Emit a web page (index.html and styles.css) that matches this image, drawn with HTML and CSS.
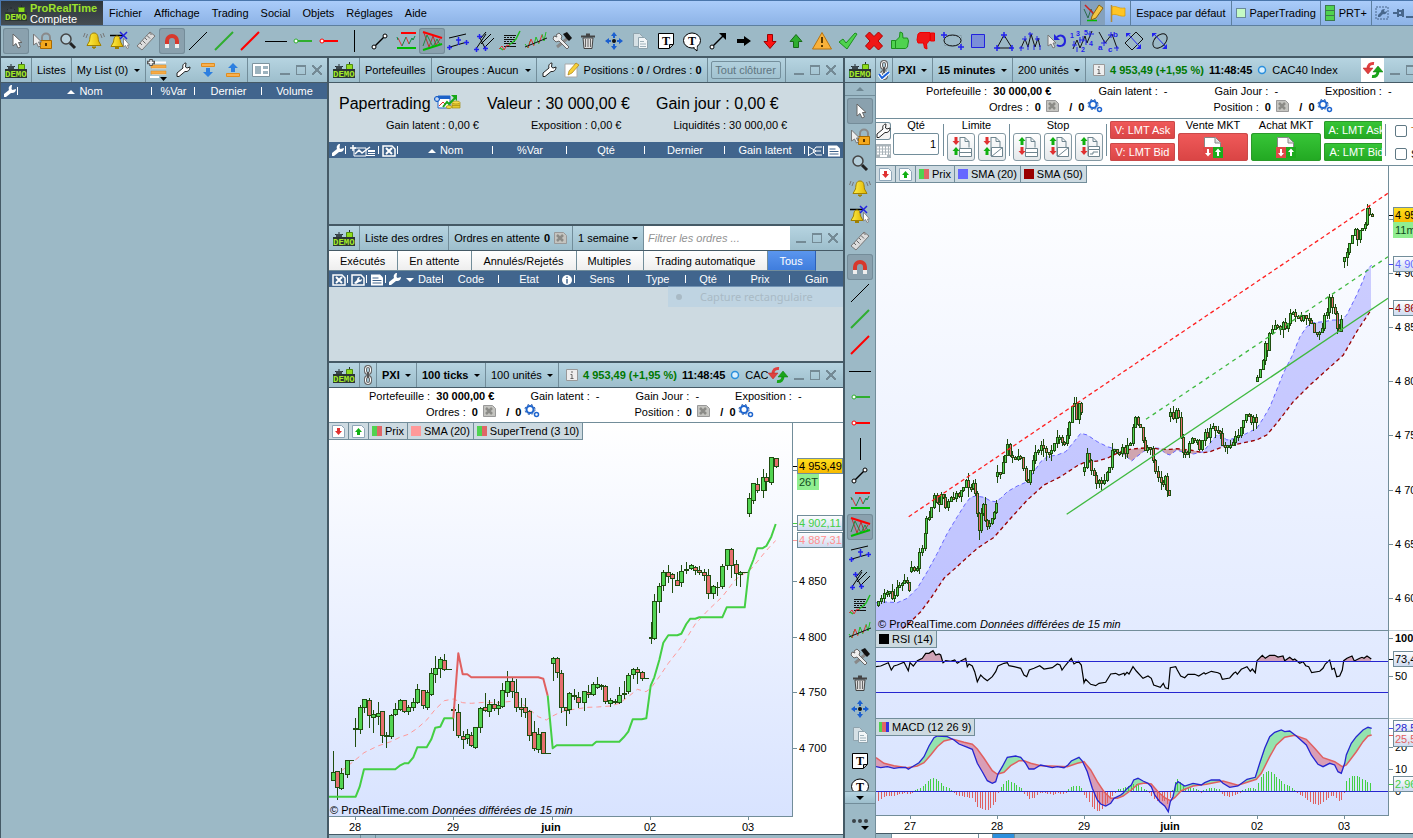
FILE: index.html
```html
<!DOCTYPE html>
<html lang="fr">
<head>
    <meta charset="UTF-8" />
    <title>ProRealTime Complete</title>
    <meta name="viewport" content="width=device-width, initial-scale=1" />
    <link rel="stylesheet" href="styles.css">
</head>
<body>
    <svg class="sprite" aria-hidden="true">
        <defs>
            <linearGradient id="gold" x1="0" y1="0" x2="1" y2="0"><stop offset="0" stop-color="#fff04a" /><stop offset="1" stop-color="#e0b400" /></linearGradient>
            <linearGradient id="plotBg" x1="0" y1="0" x2="0" y2="1"><stop offset="0" stop-color="#ffffff" /><stop offset="1" stop-color="#d8e3ff" /></linearGradient>
            <linearGradient id="tagGold" x1="0" y1="0" x2="0" y2="1"><stop offset="0" stop-color="#ffe01e" /><stop offset="1" stop-color="#f7b900" /></linearGradient>
            <linearGradient id="tagPale" x1="0" y1="0" x2="0" y2="1"><stop offset="0" stop-color="#ffffff" /><stop offset="1" stop-color="#cddaf0" /></linearGradient>
        </defs>
        <symbol id="i-demo" viewBox="0 0 22 16">
            <path d="M6 2v5M2 4.500h8M16.500 0v3" stroke="#222b30" fill="none" />
            <path d="M3 4h6v3H3z" fill="#3b474d" />
            <path d="M13.500 2.500h6v5h-6z" fill="#8fdc1c" stroke="#4f8a10" />
            <path d="M0 7h22v9H0z" fill="#2b3533" />
            <text x="0" y="15" font-family="Liberation Mono" font-weight="bold" font-size="9" fill="#a2ea2a">DEMO</text>
        </symbol>
        <symbol id="i-cursor" viewBox="0 0 26 26"><path d="M10 6v12l3-2.500 2 4.500 2.500-1-2-4.500h3.500z" fill="#fff" stroke="#666" /></symbol>
        <symbol id="i-lock" viewBox="0 0 26 26">
            <path d="M13 13V9.500a4 4 0 0 1 8 0V13" fill="none" stroke="#8a8a8a" stroke-width="2" />
            <path d="M11.500 12.500h11v8h-11z" fill="#f3a81c" stroke="#a86a00" /><path d="M17 15v3" stroke="#5a3500" stroke-width="2" />
            <path d="M4.500 6v11l3-2 2 4 2-1-2-4h3z" fill="#eee" stroke="#777" />
        </symbol>
        <symbol id="i-zoom" viewBox="0 0 26 26"><circle cx="11" cy="11" r="5" fill="#b7d0dc" stroke="#444" stroke-width="1.500" /><path d="M15 15l5 5" stroke="#222" stroke-width="3" /></symbol>
        <symbol id="i-bell" viewBox="0 0 26 26">
            <path d="M13 5c-4 0-4 4-4.500 8L6 17.500h14L17.500 13C17 9 17 5 13 5z" fill="url(#gold)" stroke="#a08000" /><path d="M11 19h4l-2 1.500z" fill="#a08000" stroke="#a08000" />
            <path d="M6.500 6L5 10M4 5L2.500 9M19.500 6l1.500 4M22 5l1.500 4" stroke="#777" fill="none" />
        </symbol>
        <symbol id="i-bellcross" viewBox="0 0 26 26">
            <path d="M3 7.500h13" stroke="#000" stroke-width="1.500" />
            <path d="M10 8c-3 0-3 3-3.500 6L4 18.500h12L13.500 14C13 11 13 8 10 8z" fill="url(#gold)" stroke="#a08000" /><path d="M8 20h4" stroke="#a08000" stroke-width="2" />
            <path d="M13 4l7 7M20 4l-7 7" stroke="#22d" stroke-width="1.500" /><path d="M16.500 10v9l2-1.500 1.500 3 1.500-.5-1-3h2z" fill="#fff" stroke="#888" />
        </symbol>
        <symbol id="i-ruler" viewBox="0 0 26 26"><path d="M4 18L17 4l5 4L9 22z" fill="#dcdcdc" stroke="#777" /><path d="M7 15l2 2M9.500 12.500l3 3M12 10l2 2M14 7.500l3 3M16.500 5l2 2" stroke="#666" /></symbol>
        <symbol id="i-magnet" viewBox="0 0 26 26"><path d="M8 16v-3a5 5 0 0 1 10 0v3" fill="none" stroke="#d8382c" stroke-width="4" /><path d="M6 16h4v4H6zM16 16h4v4h-4z" fill="#eee" /></symbol>
        <symbol id="i-line" viewBox="0 0 26 26"><path d="M4 22L22 4" stroke="#000" /></symbol>
        <symbol id="i-lineg" viewBox="0 0 26 26"><path d="M4 22L22 4" stroke="#2fae2f" stroke-width="2" /></symbol>
        <symbol id="i-liner" viewBox="0 0 26 26"><path d="M4 22L22 4" stroke="#f00" stroke-width="2" /></symbol>
        <symbol id="i-hline" viewBox="0 0 26 26"><path d="M2 13.500h22" stroke="#000" /></symbol>
        <symbol id="i-rayg" viewBox="0 0 26 26"><path d="M8 13h15" stroke="#2fae2f" stroke-width="2" /><circle cx="7" cy="13" r="2" fill="#fff" stroke="#2fae2f" /></symbol>
        <symbol id="i-rayr" viewBox="0 0 26 26"><path d="M8 13h15" stroke="#f00" stroke-width="2" /><circle cx="7" cy="13" r="2" fill="#fff" stroke="#f00" /></symbol>
        <symbol id="i-vline" viewBox="0 0 26 26"><path d="M13.500 2v22" stroke="#000" /></symbol>
        <symbol id="i-segment" viewBox="0 0 26 26"><path d="M8 18l9-9" stroke="#000" stroke-width="1.500" /><circle cx="7" cy="19" r="2" fill="#fff" stroke="#000" /><circle cx="18" cy="8" r="2" fill="#fff" stroke="#000" /></symbol>
        <symbol id="i-zigzag" viewBox="0 0 26 26"><path d="M5 10l4 8M13 9l3 7" stroke="#d33" fill="none" /><path d="M4 9l1 3M9 18l4-9M16 16l3-6 1 2 2-4" stroke="#184" fill="none" /><path d="M8 5h15" stroke="#f00" stroke-width="2" /><path d="M4 20h19" stroke="#0b0" stroke-width="2" /></symbol>
        <symbol id="i-wedge" viewBox="0 0 26 26"><path d="M5 5l5 14 4-11 3 9 4-6" stroke="#b33" fill="none" /><path d="M4 18l4-11 6 12 4-8 3 6" stroke="#284" fill="none" /><path d="M4 4l19 6" stroke="#f00" stroke-width="2" /><path d="M4 22l19-6" stroke="#0b0" stroke-width="2" /></symbol>
        <symbol id="i-parallel" viewBox="0 0 26 26"><path d="M4 10l17-4M5 19l17-5" stroke="#000" fill="none" /><path d="M4.500 17v5M2 19.500h5M13.500 9v8M11 12h5M21.500 12v5M19 14.500h5" stroke="#22e" stroke-width="1.500" /></symbol>
        <symbol id="i-fork" viewBox="0 0 26 26"><path d="M5 21L15 6M8 8l6 12M10 16l10-10M14 19l9-9M10 10l5-6" stroke="#000" fill="none" /><path d="M8.500 6v5M6 8.500h5M5.500 19v5M3 21.500h5M14.500 18v5M12 20.500h5" stroke="#22e" stroke-width="1.500" /></symbol>
        <symbol id="i-fib" viewBox="0 0 26 26"><path d="M7 7.500h12M7 11.500h12M7 15.500h12M7 18.500h12" stroke="#111" /><path d="M7 9.500h12M7 13.500h12" stroke="#111" stroke-dasharray="2 1" /><path d="M2 21l3-3 2 4 3-5 3 1" stroke="#d33" fill="none" /><path d="M3 20l3 2M12 17l4-3 3-3 4-8" stroke="#2b2" stroke-width="1.500" fill="none" /></symbol>
        <symbol id="i-regress" viewBox="0 0 26 26"><path d="M2 16l3 4 2-7M11 17l2-8 3 7M19 6l2 7 2-9" stroke="#2b2" fill="none" /><path d="M5 20l3-9 3 7M16 15l3-8" stroke="#d33" fill="none" /><path d="M2 19l22-9" stroke="#111" /></symbol>
        <symbol id="i-tools" viewBox="0 0 26 26"><path d="M8 19l11-9" stroke="#888" stroke-width="3" /><path d="M14 6l4-2 5 6-3 3-3-3z" fill="#111" /><path d="M7 7l3-2 3 3-1 3 8 8-2 2-8-8-3 1-3-3 1-3 3 1z" fill="#eee" stroke="#666" /></symbol>
        <symbol id="i-trash" viewBox="0 0 26 26"><path d="M8 10h10l-1 10.500H9z" fill="#ddd" stroke="#444" /><path d="M6 8.500h14M11 6.500h4" stroke="#444" stroke-width="2" /><path d="M10.500 11v8M13 11v8M15.500 11v8" stroke="#666" /></symbol>
        <symbol id="i-move" viewBox="0 0 26 26"><circle cx="13" cy="13" r="2" fill="#111" /><path d="M13 4l3 4h-6zM13 22l3-4h-6zM4 13l4-3v6zM22 13l-4-3v6z" fill="#1b5fd0" /><path d="M13 7v3M13 16v3M7 13h3M16 13h3" stroke="#1b5fd0" stroke-width="2" /></symbol>
        <symbol id="i-copy" viewBox="0 0 26 26"><path d="M6.500 5.500h6l3 3v10h-9z" fill="#d5e0e5" stroke="#8fa3ad" /><path d="M11.500 9.500h6l3 3v8h-9z" fill="#f2f6f8" stroke="#8fa3ad" /><path d="M13 13.500h4M13 16h6M13 18.500h6" stroke="#9fb2bb" /></symbol>
        <symbol id="i-text" viewBox="0 0 26 26"><path d="M5.500 5.500h15v11l-4 4h-11z" fill="#fff" stroke="#000" /><path d="M16.500 20v-3.500H20" fill="#bbb" stroke="#000" /><text x="9" y="17" font-family="Liberation Serif" font-weight="bold" font-size="12" fill="#000">T</text></symbol>
        <symbol id="i-bubble" viewBox="0 0 26 26"><path d="M14 19.500l4 3.500v-5" fill="#fff" stroke="#000" /><ellipse cx="13" cy="12.500" rx="8.500" ry="7.500" fill="#fff" stroke="#000" /><path d="M15 19l2.500 2.500.500-4z" fill="#fff" /><text x="9" y="17" font-family="Liberation Serif" font-weight="bold" font-size="12" fill="#000">T</text></symbol>
        <symbol id="i-arrowseg" viewBox="0 0 26 26"><path d="M8 18l10-10" stroke="#000" stroke-width="1.500" /><path d="M14 5h7v7z" fill="#000" /><circle cx="7" cy="19" r="2" fill="#fff" stroke="#000" /></symbol>
        <symbol id="i-right" viewBox="0 0 26 26"><path d="M6 11h7V8l7 5-7 5v-3H6z" fill="#000" /></symbol>
        <symbol id="i-down" viewBox="0 0 26 26"><path d="M10.500 6.500h5v7h3.500l-6 7-6-7h3.500z" fill="#f11" stroke="#900" /></symbol>
        <symbol id="i-up" viewBox="0 0 26 26"><path d="M10.500 19.500h5v-6h3.500l-6-7-6 7h3.500z" fill="#2eae2e" stroke="#176b17" /></symbol>
        <symbol id="i-warn" viewBox="0 0 26 26"><path d="M13 4.500L22.500 21h-19z" fill="#f9b13a" stroke="#b87510" stroke-linejoin="round" /><path d="M13 9v6M13 17v2" stroke="#5b3a00" stroke-width="2" /></symbol>
        <symbol id="i-check" viewBox="0 0 26 26"><path d="M4 14l4-3 3 4 9-10 2 1-10 15z" fill="#4fd24f" stroke="#1d8f1d" /></symbol>
        <symbol id="i-cross" viewBox="0 0 26 26"><path d="M4.500 8l4-4L13 8.500 17.500 4l4 4-4.500 5 4.500 5-4 4-4.500-4.500L8.500 22l-4-4L9 13z" fill="#f01616" stroke="#b00000" /></symbol>
        <symbol id="i-thumb" viewBox="0 0 26 26"><path d="M4.500 12.500h4v8h-4zM8.500 13l4-4 .5-5 2.500 1 .5 5h4.500l1 3-1 6-2 1.500H8.500z" fill="#4fd24f" stroke="#1d8f1d" stroke-linejoin="round" /></symbol>
        <symbol id="i-thumbdown" viewBox="0 0 26 26"><path d="M17.500 5h4v8h-4zM17 12l-3.500 4 .500 5-2.500-1-1-5H5l-1-3 1-6 2-1.500h10z" fill="#f01616" stroke="#e00" stroke-linejoin="round" /></symbol>
        <symbol id="i-ellipse" viewBox="0 0 26 26"><path d="M5.500 7.500h17v10h-17z" fill="none" stroke="#8299a4" stroke-dasharray="2 1" /><ellipse cx="13.500" cy="12.500" rx="8.500" ry="5.500" fill="none" stroke="#111" /><path d="M5 4v6M2 7h6M22 16v6M19 19h6" stroke="#22e" stroke-width="1.500" /></symbol>
        <symbol id="i-square" viewBox="0 0 26 26"><path d="M6.500 6.500h13v13h-13z" fill="#7b8fd8" stroke="#22d" /></symbol>
        <symbol id="i-tri" viewBox="0 0 26 26"><path d="M13 7l-7 13h15z" fill="none" stroke="#111" /><path d="M13 4v6M10 7h6M6 17v6M3 20h6M21 17v6M18 20h5" stroke="#22e" stroke-width="1.500" /></symbol>
        <symbol id="i-peaks" viewBox="0 0 26 26"><path d="M4 20l4-9 3 8 3-13 4 13 3-9 2 9" fill="none" stroke="#111" /><path d="M4 18v5M2 20h5M8 8v5M5 11h5M13 4v5M11 6h5M20 8v5M18 11h5M17 17v5M23 17v5M11 17v5" stroke="#22e" /></symbol>
        <symbol id="i-undo" viewBox="0 0 26 26"><path d="M14 9c4-3 8-1 8 4s-5 6-8 4" fill="none" stroke="#22d" stroke-width="2" /><path d="M11 6v6h6z" fill="#22d" /><path d="M5 7v11l3-2 2 4 2-1-2-4h3z" fill="#eee" stroke="#777" /></symbol>
        <symbol id="i-waves" viewBox="0 0 26 26"><path d="M4 21l4-9 3 8 5-12 2 7 5-12" fill="none" stroke="#111" /><path d="M5 13v6M8 19v5M11 9v6M14 8v6M17 12v5M21 3v6M3 17h5M10 12h6M19 6h6" stroke="#22e" /><text x="1" y="10" font-size="7" font-weight="bold" fill="#22e">1</text><text x="7" y="8" font-size="7" font-weight="bold" fill="#22e">3</text><text x="15" y="7" font-size="7" font-weight="bold" fill="#22e">5</text><text x="20" y="18" font-size="7" font-weight="bold" fill="#22e">4</text><text x="12" y="24" font-size="7" font-weight="bold" fill="#22e">2</text></symbol>
        <symbol id="i-abc" viewBox="0 0 26 26"><path d="M4 4l6 11 7-9 5 14" fill="none" stroke="#111" /><path d="M9 12v6M6 15h6M16 4v6M13 7h6M22 18v5M19 20h5" stroke="#22e" /><text x="3" y="22" font-size="8" font-weight="bold" fill="#22e">a</text><text x="18" y="9" font-size="8" font-weight="bold" fill="#22e">b</text><text x="13" y="24" font-size="8" font-weight="bold" fill="#22e">c</text></symbol>
        <symbol id="i-rotsq" viewBox="0 0 26 26"><path d="M4 15L15 4l7 7-11 11z" fill="none" stroke="#111" /><path d="M7 6l12 13" stroke="#22e" /><path d="M5 5h5L5 9zM20 21v-5l-5 5z" fill="#22e" /></symbol>
        <symbol id="i-rotel" viewBox="0 0 26 26"><ellipse cx="13" cy="13" rx="8.500" ry="5.500" transform="rotate(-45 13 13)" fill="none" stroke="#111" /><path d="M7 6l12 13" stroke="#22e" /><path d="M5 5h5L5 9zM20 21v-5l-5 5z" fill="#22e" /></symbol>
        <symbol id="i-wrench" viewBox="0 0 16 16"><path d="M2 11l6-5c-1-3 1-5 3-5l-.5 4 1.500 1 3-1c0 3-2 5-5 4.500L4 14.500H2z" fill="#fff" stroke="#222" /></symbol>
        <symbol id="i-wrenchw" viewBox="0 0 14 14"><path d="M1 10l5-4c-1-3 1-5 3-5l-.5 4 1 1L13 5c0 3-2 4.500-5 4l-5 4H1z" fill="#fff" /></symbol>
        <symbol id="i-list" viewBox="0 0 22 22"><path d="M4 3.500h15M5 8.500h14M5 14.500h14" stroke="#fff" stroke-width="2" /><path d="M4 6h15v3H4zM4 12h15v3H4z" fill="#f6ab45" stroke="#d98a20" stroke-width=".5" /><path d="M3 18h9" stroke="#fff" stroke-width="2" /><path d="M4 0v7M0 3.500h8" stroke="#555" stroke-width="3.500" /><path d="M4 1v5M1.500 3.500h5" stroke="#fff" stroke-width="1.500" /><path d="M13 18h7l-3.500 4z" fill="#000" /></symbol>
        <symbol id="i-listdown" viewBox="0 0 16 16"><path d="M1.500 1.500h13v3h-13z" fill="#f8b04f" stroke="#e08c1e" /><path d="M6 6h4v4h3l-5 5-5-5h3z" fill="#2d7fe0" /></symbol>
        <symbol id="i-listup" viewBox="0 0 16 16"><path d="M1.500 11.500h13v3h-13z" fill="#f8b04f" stroke="#e08c1e" /><path d="M6 10h4V6h3L8 1 3 6h3z" fill="#2d7fe0" /></symbol>
        <symbol id="i-layout" viewBox="0 0 18 16"><path d="M.5 1.500h17v13H.500z" fill="#fff" stroke="#7d939e" /><path d="M3 4h6v8H3zM11 4h5v3h-5zM11 9h5v3h-5z" fill="#9db3be" /></symbol>
        <symbol id="i-note" viewBox="0 0 16 16"><path d="M1 2h12v13H1z" fill="#fff" stroke="#aaa" /><path d="M5 9l7-8 3 2-7 8-4 2z" fill="#f7d038" stroke="#a87c10" stroke-width=".7" /></symbol>
        <symbol id="i-chain" viewBox="0 0 12 20"><rect x="3.500" y="1.500" width="5" height="7" rx="2.500" fill="none" stroke="#666" stroke-width="3" /><rect x="3.500" y="11.500" width="5" height="7" rx="2.500" fill="none" stroke="#666" stroke-width="3" /><rect x="3.500" y="1.500" width="5" height="7" rx="2.500" fill="none" stroke="#fff" /><rect x="3.500" y="11.500" width="5" height="7" rx="2.500" fill="none" stroke="#fff" /><path d="M6 7v6" stroke="#555" stroke-width="2" /></symbol>
        <symbol id="i-chaincheck" viewBox="0 0 12 20"><use href="#i-chain" width="12" height="20" /><path d="M1 14l3 4 7-6" stroke="#fff" stroke-width="4" fill="none" /><path d="M1 14l3 4 7-6" stroke="#1b62dd" stroke-width="2" fill="none" /></symbol>
        <symbol id="i-info" viewBox="0 0 12 12"><path d="M.5.500h11v11H.500z" fill="#eee" stroke="#999" /><path d="M6 2v2M4.500 5.500H6V10M4.500 9.500h3" stroke="#666" fill="none" /></symbol>
        <symbol id="i-ring" viewBox="0 0 10 10"><circle cx="5" cy="5" r="3.500" fill="#d9f0ff" stroke="#2b8fdc" stroke-width="1.500" /></symbol>
        <symbol id="i-refresh" viewBox="0 0 20 18"><path d="M11 2.500C7 2 5 4 5 8" stroke="#e04040" stroke-width="3" fill="none" /><path d="M0 7h10l-5 6z" fill="#e04040" stroke="#b52020" stroke-width=".5" /><path d="M9 15.500c4 .5 6-1.500 6-5.500" stroke="#1ba51b" stroke-width="3" fill="none" /><path d="M10 11h10l-5-6z" fill="#1ba51b" stroke="#0a7a0a" stroke-width=".5" /></symbol>
        <symbol id="i-xdoc" viewBox="0 0 13 12"><path d="M.5.500h9l3 3v8H.500z" fill="#c4c4c0" stroke="#999" /><path d="M3 3l6 6M9 3L3 9" stroke="#8b8b87" stroke-width="2.500" /></symbol>
        <symbol id="i-xdocw" viewBox="0 0 14 12"><path d="M1 1h9l3 3v7H1z" fill="#41658d" stroke="#fff" stroke-width="1.500" /><path d="M4 3l6 6M10 3L4 9" stroke="#fff" stroke-width="2" /></symbol>
        <symbol id="i-wdocw" viewBox="0 0 14 12"><path d="M1 1h9l3 3v7H1z" fill="#41658d" stroke="#fff" stroke-width="1.500" /><path d="M3 9l3-3c0-2 1-3 3-3l-1 2 1 1 2-1c0 2-1 3-3 3l-3 2z" fill="#fff" /></symbol>
        <symbol id="i-docw" viewBox="0 0 14 12"><path d="M1 .500h9l3 3v8H1z" fill="#fff" /><path d="M2.500 4h6M2.500 6.500h9M2.500 9h9" stroke="#41658d" /></symbol>
        <symbol id="i-infow" viewBox="0 0 12 12"><circle cx="6" cy="6" r="5" fill="#fff" /><path d="M6 2.500v1.500M6 5v4.500" stroke="#41658d" stroke-width="1.500" /></symbol>
        <symbol id="i-cut" viewBox="0 0 16 12"><path d="M1.500 1v10M2 2l7 4-7 4M15 2H9L6 6l3 4h6M8 6h6" stroke="#fff" fill="none" /></symbol>
        <symbol id="i-walletw" viewBox="0 0 28 12"><path d="M5 3h12v8H5z" fill="none" stroke="#fff" /><path d="M4 0v6M1 3h6M6 9l4-4 3 3 8-6" stroke="#fff" stroke-width="1.500" fill="none" /><path d="M19 5h7v2h-7zM19 8h7v1h-7zM17 10h9v1h-9z" fill="#fff" /></symbol>
        <symbol id="i-wallet" viewBox="0 0 28 14"><path d="M5 1h12v12H5z" fill="#fff" stroke="#1d62c8" /><path d="M5 1h12v3H5z" fill="#1d62c8" /><path d="M6 11l4-4 3 3" stroke="#e03030" fill="none" /><path d="M19 8v5h8V8z" fill="#e5c92e" stroke="#a08a10" stroke-width=".7" /><path d="M19 10.500h8" stroke="#a08a10" stroke-width=".7" /><ellipse cx="23" cy="7.500" rx="4" ry="1.500" fill="#f5dc4a" stroke="#a08a10" stroke-width=".7" /><ellipse cx="16" cy="12" rx="3" ry="1.500" fill="#f5dc4a" stroke="#a08a10" stroke-width=".7" /><path d="M10 12l4-5 2 2 6-6" stroke="#17a717" stroke-width="2" fill="none" /><path d="M18 0h6v6z" fill="#17a717" /><path d="M4 1v6M1 4h6" stroke="#1d62c8" stroke-width="3" /><path d="M4 2v4M2 4h4" stroke="#fff" /></symbol>
        <symbol id="i-gears" viewBox="0 0 16 14"><circle cx="6" cy="5.500" r="3.500" fill="none" stroke="#1f66cf" stroke-width="2" /><circle cx="6" cy="5.500" r="5" fill="none" stroke="#1a52a8" stroke-dasharray="2 2" /><circle cx="12.500" cy="10.500" r="2" fill="#fff" stroke="#1f66cf" stroke-width="1.500" /></symbol>
        <symbol id="i-docdown" viewBox="0 0 13 13"><path d="M.5.500h9l3 3v9H.500z" fill="#fff" stroke="#8fa6b8" /><path d="M5 3h3v3h2L6.500 10 3 6h2z" fill="#e03030" /></symbol>
        <symbol id="i-docup" viewBox="0 0 13 13"><path d="M.5.500h9l3 3v9H.500z" fill="#fff" stroke="#8fa6b8" /><path d="M5 10h3V7h2L6.500 3 3 7h2z" fill="#12b012" /></symbol>
        <symbol id="i-ordlim" viewBox="0 0 26 26"><path d="M12 3.500h5l4 4v6M17 3.500v4h4M12 3v19" fill="none" stroke="#6f858f" /><path d="M11.500 14.500h12v8h-12zM11.500 18.500h12" fill="#fff" stroke="#6f858f" /><path d="M6.500 3h3v4h2l-3.500 4-3.500-4h2z" fill="#e03030" /><path d="M6.500 21h3v-4h2L8 13l-3.500 4h2z" fill="#10b010" /></symbol>
        <symbol id="i-ordlim2" viewBox="0 0 26 26"><path d="M12 3.500h5l4 4v6M17 3.500v4h4M12 3v19" fill="none" stroke="#6f858f" /><path d="M12.500 13.500h11v9h-11zM12.500 22.500l11-9" fill="#fff" stroke="#6f858f" /><path d="M6.500 3h3v4h2l-3.500 4-3.500-4h2z" fill="#e03030" /><path d="M6.500 21h3v-4h2L8 13l-3.500 4h2z" fill="#10b010" /></symbol>
        <symbol id="i-ordstop" viewBox="0 0 26 26"><path d="M12 3.500h5l4 4v6M17 3.500v4h4M12 3v19" fill="none" stroke="#6f858f" /><path d="M11.500 14.500h12v8h-12zM11.500 18.500h12" fill="#fff" stroke="#6f858f" /><path d="M6.500 11h3V7h2L8 3 4.500 7h2z" fill="#10b010" /><path d="M6.500 13h3v4h2L8 21l-3.500-4h2z" fill="#e03030" /></symbol>
        <symbol id="i-ordstop2" viewBox="0 0 26 26"><path d="M12 3.500h5l4 4v6M17 3.500v4h4M12 3v19" fill="none" stroke="#6f858f" /><path d="M12.500 13.500h11v9h-11zM12.500 22.500l11-9" fill="#fff" stroke="#6f858f" /><path d="M6.500 11h3V7h2L8 3 4.500 7h2z" fill="#10b010" /><path d="M6.500 13h3v4h2L8 21l-3.500-4h2z" fill="#e03030" /></symbol>
        <symbol id="i-ordtrail" viewBox="0 0 26 26"><path d="M12 3.500h5l4 4v6M17 3.500v4h4M12 3v19" fill="none" stroke="#6f858f" /><path d="M12.500 12.500h11v3h-11zM12.500 15.500h11v7h-11zM14 20h3v-2h5" fill="#fff" stroke="#6f858f" /><path d="M6.500 11h3V7h2L8 3 4.500 7h2z" fill="#10b010" /><path d="M6.500 13h3v4h2L8 21l-3.500-4h2z" fill="#e03030" /></symbol>
        <symbol id="i-market" viewBox="0 0 24 24"><path d="M3.500 13V2.500h11l5 5V13z" fill="#fff" stroke="#888" /><path d="M14 3v5h5" fill="#ddd" stroke="#888" /><path d="M2 12h10v11H2z" fill="#e04848" /><path d="M12 12h10v11H12z" fill="#1cab1c" /><path d="M6 14h2v4h2l-3 3.500L4 18h2zM16 21h2v-4h2l-3-3.500-3 3.500h2z" fill="#fff" /></symbol>
        <symbol id="i-keys" viewBox="0 0 15 14"><path d="M0 0h15v14H0z" fill="#aab4ba" /><path d="M1 3.500h13M1 6.500h13M1 9.500h13" stroke="#fff" stroke-width="2" stroke-dasharray="2 1" /><path d="M4 12h7" stroke="#fff" stroke-width="2" /></symbol>
        <symbol id="i-draw" viewBox="0 0 22 20"><path d="M2 6l4 9 3-9 4 10" stroke="#2b6a4b" fill="none" /><path d="M5 17.500h10" stroke="#0b0" stroke-width="1.500" /><path d="M3 2l9 9" stroke="#c22" stroke-width="1.500" /><path d="M10 13L17 2l4 3-7 10-5 2z" fill="#f3c644" stroke="#8a6510" /></symbol>
        <symbol id="i-flag" viewBox="0 0 18 20"><path d="M2.500 2v17" stroke="#b08a3a" stroke-width="1.500" /><path d="M3 4c4-2 6 2 13 1v8c-6 1-9-3-13-1z" fill="#ffc524" stroke="#d99a00" stroke-width=".7" /></symbol>
        <symbol id="i-wrenchbox" viewBox="0 0 14 14"><path d="M1 1h12v12H1z" fill="none" stroke="#48678c" stroke-dasharray="2 1" /><path d="M3 9l3-3c0-2 1-3 4-3L9 5l1 1 2-1c0 2-2 4-4 3l-3 3H3z" fill="#48678c" /></symbol>
        <symbol id="i-pin" viewBox="0 0 12 10"><path d="M0 5h5M5 1v8M5 3h4v4H5M10 1v8" stroke="#48678c" stroke-width="2" fill="none" /></symbol>
    </svg>

    <header class="menubar">
        <div class="brand">
            <svg class="demo"><use href="#i-demo" /></svg>
            <div><b>ProRealTime</b><span>Complete</span></div>
        </div>
        <nav class="menus">
            <a href="#">Fichier</a>
            <a href="#">Affichage</a>
            <a href="#">Trading</a>
            <a href="#">Social</a>
            <a href="#">Objets</a>
            <a href="#">Réglages</a>
            <a href="#">Aide</a>
        </nav>
        <div class="status">
            <button class="pressed" aria-label="Dessin"><svg width="22" height="20"><use href="#i-draw" /></svg></button>
            <button aria-label="Drapeau"><svg width="18" height="20"><use href="#i-flag" /></svg></button>
            <button class="sep wide">Espace par défaut</button>
            <button class="sep"><i class="light"></i>PaperTrading</button>
            <button class="sep"><i class="bars"></i>PRT+</button>
            <button class="sep slim" aria-label="Options"><svg width="14" height="14"><use href="#i-wrenchbox" /></svg></button>
            <button class="pin" aria-label="Épingler"><svg width="12" height="10"><use href="#i-pin" /></svg></button>
            <button class="tiny" aria-label="Réduire"></button>
        </div>
    </header>
    <div class="toolbar" id="toolbar"></div>

    <main class="workspace">
        <section class="panel lists">
            <div class="head">
                <div class="cell logo"><svg class="demo"><use href="#i-demo" /></svg></div>
                <div class="cell">Listes</div>
                <div class="cell drop"><select aria-label="Liste"><option>My List (0)</option></select></div>
                <div class="cell icons">
                    <button aria-label="Ajouter"><svg width="22" height="22"><use href="#i-list" /></svg></button>
                    <button aria-label="Configurer"><svg width="16" height="16"><use href="#i-wrench" /></svg></button>
                    <button aria-label="Importer"><svg width="16" height="16"><use href="#i-listdown" /></svg></button>
                    <button aria-label="Exporter"><svg width="16" height="16"><use href="#i-listup" /></svg></button>
                </div>
                <button class="layout" aria-label="Disposition"><svg width="18" height="16"><use href="#i-layout" /></svg></button>
                <div class="win"><button class="min" aria-label="Réduire"></button><button class="max" aria-label="Agrandir"></button><button class="close" aria-label="Fermer"></button></div>
            </div>
            <table class="cols t-lists">
                <thead><tr><th><svg width="14" height="14"><use href="#i-wrenchw" /></svg></th><th><i class="asc"></i>Nom</th><th>%Var</th><th>Dernier</th><th>Volume</th></tr></thead>
            </table>
        </section>

        <div class="middle">
            <section class="panel portfolio">
                <div class="head">
                    <div class="cell logo"><svg class="demo"><use href="#i-demo" /></svg></div>
                    <div class="cell">Portefeuilles</div>
                    <div class="cell drop"><select aria-label="Groupes"><option>Groupes : Aucun</option></select></div>
                    <div class="cell tools">
                        <button aria-label="Configurer"><svg width="16" height="16"><use href="#i-wrench" /></svg></button>
                        <button aria-label="Notes"><svg width="16" height="16"><use href="#i-note" /></svg></button>
                        <span>Positions : <b>0</b> / Ordres : <b>0</b></span>
                    </div>
                    <div class="cell closeall"><button>Tout clôturer</button></div>
                    <div class="win"><button class="min" aria-label="Réduire"></button><button class="max" aria-label="Agrandir"></button><button class="close" aria-label="Fermer"></button></div>
                </div>
                <div class="summary">
                    <div class="big"><span>Papertrading <svg width="28" height="14"><use href="#i-wallet" /></svg></span><span>Valeur : 30 000,00 €</span><span>Gain jour : 0,00 €</span></div>
                    <div class="small"><span>Gain latent : 0,00 €</span><span>Exposition : 0,00 €</span><span>Liquidités : 30 000,00 €</span></div>
                </div>
                <table class="cols t-port">
                    <thead><tr>
                        <th><svg width="14" height="14"><use href="#i-wrenchw" /></svg></th><th><svg width="28" height="12"><use href="#i-walletw" /></svg></th><th><svg width="14" height="12"><use href="#i-xdocw" /></svg></th>
                        <th><i class="asc"></i>Nom</th><th>%Var</th><th>Qté</th><th>Dernier</th><th>Gain latent</th>
                        <th><svg width="16" height="12"><use href="#i-cut" /></svg></th><th><svg width="14" height="12"><use href="#i-docw" /></svg></th>
                    </tr></thead>
                </table>
            </section>

            <section class="panel orders">
                <div class="head">
                    <div class="cell logo"><svg class="demo"><use href="#i-demo" /></svg></div>
                    <div class="cell">Liste des ordres</div>
                    <div class="cell pending">Ordres en attente <b>0</b> <svg width="13" height="12"><use href="#i-xdoc" /></svg></div>
                    <div class="cell drop tight"><select aria-label="Période"><option>1 semaine</option></select></div>
                    <input type="text" class="filter" placeholder="Filtrer les ordres ..." aria-label="Filtrer les ordres" />
                    <div class="win"><button class="min" aria-label="Réduire"></button><button class="max" aria-label="Agrandir"></button><button class="close" aria-label="Fermer"></button></div>
                </div>
                <div class="tabs">
                    <button>Exécutés</button><button>En attente</button><button>Annulés/Rejetés</button><button>Multiples</button><button>Trading automatique</button><button class="on">Tous</button>
                </div>
                <table class="cols t-ord">
                    <thead><tr>
                        <th><svg width="14" height="12"><use href="#i-xdocw" /></svg></th><th><svg width="14" height="12"><use href="#i-wdocw" /></svg></th><th><svg width="14" height="12"><use href="#i-docw" /></svg></th>
                        <th><svg width="14" height="14"><use href="#i-wrenchw" /></svg><i class="desc"></i>Date</th><th>Code</th><th>Etat</th><th><svg width="12" height="12"><use href="#i-infow" /></svg></th>
                        <th>Sens</th><th>Type</th><th>Qté</th><th>Prix</th><th>Gain</th>
                    </tr></thead>
                </table>
                <div class="ghost"><i></i><span>Capture rectangulaire</span></div>
            </section>

            <section class="panel chart ticks">
                <div class="head">
                    <div class="cell logo"><svg class="demo"><use href="#i-demo" /></svg></div>
                    <div class="cell link"><svg width="12" height="20"><use href="#i-chain" /></svg></div>
                    <div class="cell drop"><select class="strong" aria-label="Valeur"><option>PXI</option></select></div>
                    <div class="cell drop"><select class="strong" aria-label="Unité de temps"><option>100 ticks</option></select></div>
                    <div class="cell drop"><select aria-label="Historique"><option>100 unités</option></select></div>
                    <div class="ticker"><svg width="12" height="12"><use href="#i-info" /></svg><b class="up">4 953,49 (+1,95 %)</b><b>11:48:45</b><svg width="10" height="10"><use href="#i-ring" /></svg><span>CAC</span></div>
                    <svg class="refresh" width="20" height="18"><use href="#i-refresh" /></svg>
                    <div class="win"><button class="min" aria-label="Réduire"></button><button class="max" aria-label="Agrandir"></button><button class="close" aria-label="Fermer"></button></div>
                </div>
                <div class="account">
                    <div><span>Portefeuille :&nbsp; <b>30 000,00 €</b></span><span>Gain latent :&nbsp; -</span><span>Gain Jour :&nbsp; -</span><span>Exposition :&nbsp; -</span></div>
                    <div class="second"><span>Ordres :&nbsp; <b>0</b> <svg width="13" height="12"><use href="#i-xdoc" /></svg> &nbsp; <b>/&nbsp; 0</b><svg width="16" height="14"><use href="#i-gears" /></svg></span><span>Position :&nbsp; <b>0</b> <svg width="13" height="12"><use href="#i-xdoc" /></svg> &nbsp; <b>/&nbsp; 0</b><svg width="16" height="14"><use href="#i-gears" /></svg></span></div>
                </div>
                <div class="plot">
                    <svg id="tickChart" class="canvas"></svg>
                    <div class="legend">
                        <span><svg width="13" height="13"><use href="#i-docdown" /></svg></span><span><svg width="13" height="13"><use href="#i-docup" /></svg></span><span><i class="sw duo"></i>Prix</span><span><i class="sw pink"></i>SMA (20)</span><span><i class="sw duo"></i>SuperTrend (3 10)</span>
                    </div>
                </div>
                <div class="strip"><i></i><i></i></div>
            </section>
        </div>

        <section class="panel chart quarter">
            <div class="head">
                <div class="cell logo"><svg class="demo"><use href="#i-demo" /></svg></div>
                <div class="cell link"><svg width="12" height="20"><use href="#i-chaincheck" /></svg></div>
                <div class="cell drop"><select class="strong" aria-label="Valeur"><option>PXI</option></select></div>
                <div class="cell drop"><select class="strong" aria-label="Unité de temps"><option>15 minutes</option></select></div>
                <div class="cell drop"><select aria-label="Historique"><option>200 unités</option></select></div>
                <div class="ticker"><svg width="12" height="12"><use href="#i-info" /></svg><b class="up">4 953,49 (+1,95 %)</b><b>11:48:45</b><svg width="10" height="10"><use href="#i-ring" /></svg><span>CAC40 Index</span></div>
                <div class="refresh-tab"><svg width="20" height="18"><use href="#i-refresh" /></svg></div>
                <div class="win cut"><button class="min" aria-label="Réduire"></button><button class="max" aria-label="Agrandir"></button></div>
            </div>
            <div class="body">
                <aside class="side">
                    <button class="scroll up" aria-label="Monter"></button>
                    <div class="stack" id="sidebar"></div>
                    <button class="scroll down" aria-label="Descendre"></button>
                    <button class="more" aria-label="Plus d'outils"><i></i><i></i><i></i></button>
                </aside>
                <div class="view">
                    <div class="account">
                        <div><span>Portefeuille :&nbsp; <b>30 000,00 €</b></span><span>Gain latent :&nbsp; -</span><span>Gain Jour :&nbsp; -</span><span>Exposition :&nbsp; -</span></div>
                        <div class="second"><span>Ordres :&nbsp; <b>0</b> <svg width="13" height="12"><use href="#i-xdoc" /></svg> &nbsp; <b>/&nbsp; 0</b><svg width="16" height="14"><use href="#i-gears" /></svg></span><span>Position :&nbsp; <b>0</b> <svg width="13" height="12"><use href="#i-xdoc" /></svg> &nbsp; <b>/&nbsp; 0</b><svg width="16" height="14"><use href="#i-gears" /></svg></span></div>
                    </div>
                    <div class="trade">
                        <div class="setup"><button aria-label="Configurer"><svg width="16" height="16"><use href="#i-wrench" /></svg></button><svg width="15" height="14"><use href="#i-keys" /></svg></div>
                        <div class="qty"><label for="qty">Qté</label><input type="text" id="qty" value="1" /></div>
                        <i class="bar"></i>
                        <div class="group"><span>Limite</span><div><button aria-label="Limite"><svg><use href="#i-ordlim" /></svg></button><button aria-label="Limite oblique"><svg><use href="#i-ordlim2" /></svg></button></div></div>
                        <i class="bar"></i>
                        <div class="group"><span>Stop</span><div><button aria-label="Stop"><svg><use href="#i-ordstop" /></svg></button><button aria-label="Stop oblique"><svg><use href="#i-ordstop2" /></svg></button><button aria-label="Stop suiveur"><svg><use href="#i-ordtrail" /></svg></button></div></div>
                        <i class="bar"></i>
                        <div class="pair sell"><button>V: LMT Ask</button><button>V: LMT Bid</button></div>
                        <div class="market sell"><span>Vente MKT</span><button aria-label="Vente MKT"><svg><use href="#i-market" /></svg></button></div>
                        <div class="market buy"><span>Achat MKT</span><button aria-label="Achat MKT"><svg><use href="#i-market" /></svg></button></div>
                        <div class="pair buy"><button>A: LMT Ask</button><button>A: LMT Bid</button></div>
                        <i class="bar"></i>
                        <div class="checks"><label><input type="checkbox" /><span class="warm">T</span></label><label><input type="checkbox" /><span>S</span></label></div>
                    </div>
                    <div class="plot">
                        <svg id="quarterChart" class="canvas"></svg>
                        <div class="legend">
                            <span><svg width="13" height="13"><use href="#i-docdown" /></svg></span><span><svg width="13" height="13"><use href="#i-docup" /></svg></span><span><i class="sw duo"></i>Prix</span><span><i class="sw blue"></i>SMA (20)</span><span><i class="sw maroon"></i>SMA (50)</span>
                        </div>
                        <div class="legend rsi"><span><i class="sw black"></i>RSI (14)</span></div>
                        <div class="legend macd"><span><i class="sw trio"></i>MACD (12 26 9)</span></div>
                    </div>
                    <div class="strip taskbar"><i></i><i></i><i></i></div>
                </div>
            </div>
        </section>
    </main>
    <script src="app.js"></script>
</body>
</html>
```

FILE: styles.css
```css
:root {
    --steel: #9cb9c6;
    --pale: #cddae1;
    --edge: #455a66;
    --rule: #728d9a;
    --navy: #41658d;
}
* {
    box-sizing: border-box;
}
body {
    margin: 0;
    height: 100vh;
    overflow: hidden;
    display: flex;
    flex-direction: column;
    font-family: "Liberation Sans", Arial, sans-serif;
    font-size: 11px;
    color: #000;
    background: var(--edge);
    white-space: nowrap;
}
button, select, input {
    font: inherit;
    color: inherit;
}
button {
    border: 0;
    padding: 0;
    background: none;
    display: flex;
    align-items: center;
    justify-content: center;
    flex-shrink: 0;
}
svg {
    flex-shrink: 0;
    display: block;
}
.sprite {
    position: absolute;
    width: 0;
    height: 0;
}
.demo {
    width: 22px;
    height: 16px;
}

/* menu bar */
.menubar {
    display: flex;
    height: 26px;
    flex-shrink: 0;
    border-top: 1px solid #4a76ab;
    border-bottom: 1px solid #5d7f9f;
    background: linear-gradient(#aaccfa, #8db3e6);
}
.brand {
    display: flex;
    align-items: center;
    gap: 3px;
    width: 103px;
    padding-left: 4px;
    background: linear-gradient(#2d353a, #454d52);
    border-left: 1px solid #4a76ab;
}
.brand b {
    display: block;
    color: #9be22c;
    font-size: 11px;
    line-height: 11px;
}
.brand span {
    display: block;
    color: #fff;
    line-height: 10px;
}
.menus {
    display: flex;
    align-items: center;
    gap: 12px;
    padding-left: 6px;
    flex: 1;
}
.menus a {
    color: #000;
    text-decoration: none;
}
.status {
    display: flex;
}
.status button {
    width: 25px;
    gap: 4px;
}
.status .pressed {
    background: #84a1bd;
    border-left: 1px solid #5d7f9f;
}
.status .sep {
    width: auto;
    padding: 0 4px;
    border-left: 1px solid #5d7f9f;
}
.status .wide {
    padding: 0 5px;
}
.status .slim {
    padding: 0 3px;
}
.status .pin {
    width: 14px;
}
.status .tiny {
    width: 7px;
    align-self: center;
    height: 9px;
    border-bottom: 2px solid #48678c;
}
.light {
    width: 10px;
    height: 10px;
    background: #c4fac4;
    border: 1px solid #6a8a9a;
}
.bars {
    width: 10px;
    height: 16px;
    border: 1px solid #3c7a4c;
    background: repeating-linear-gradient(#4fd24f 0 4px, #3c7a4c 4px 5px);
}

/* drawing tools */
.toolbar {
    display: flex;
    align-items: center;
    height: 30px;
    flex-shrink: 0;
    padding-left: 2px;
    background: var(--steel);
    border-left: 1px solid var(--edge);
}
.tool {
    width: 26px;
    height: 26px;
    border-radius: 3px;
}
.tool svg {
    width: 26px;
    height: 26px;
}
.tool.on {
    background: #8aa1ae;
    box-shadow: inset 0 0 0 1px #748c99;
}

.workspace {
    display: grid;
    grid-template-columns: 327fr 514fr 568fr;
    gap: 2px;
    flex: 1;
    min-height: 0;
    padding-top: 2px;
}
.panel {
    min-width: 0;
    background: var(--steel);
    position: relative;
}
.lists {
    border-left: 1px solid var(--edge);
}
.middle {
    display: flex;
    flex-direction: column;
    gap: 2px;
    min-width: 0;
    min-height: 0;
}
.portfolio {
    height: 166px;
    flex-shrink: 0;
}
.orders {
    height: 135px;
    flex-shrink: 0;
    background: var(--pale);
}

/* panel headers */
.head {
    display: flex;
    height: 25px;
    flex-shrink: 0;
    overflow: hidden;
    background: linear-gradient(#b6d4e1, #9dbecc);
    border-bottom: 1px solid var(--edge);
}
.cell {
    display: flex;
    align-items: center;
    padding: 0 5px;
    border-right: 1px solid var(--rule);
    flex-shrink: 0;
}
.cell.logo {
    width: 31px;
    padding: 0 4px;
}
.cell.link {
    width: 17px;
    padding: 0 2px;
}
.cell.icons {
    padding: 0;
    width: 102px;
}
.icons button {
    width: 25px;
}
.cell.tools {
    gap: 7px;
    padding-left: 4px;
}
.tools span {
    margin-left: -3px;
}
.layout {
    padding: 0 4px;
}
.cell.pending {
    gap: 4px;
}
.drop {
    gap: 5px;
}
.drop::after {
    content: "";
    border: 3px solid transparent;
    border-top-color: #000;
    border-bottom: 0;
}
.drop.tight {
    gap: 3px;
}
.drop select {
    appearance: none;
    border: 0;
    padding: 0;
    background: none;
}
.drop select.strong {
    font-weight: bold;
}
.closeall button {
    width: 70px;
    height: 18px;
    color: #60757f;
    border: 1px solid #748f9c;
    border-radius: 2px;
}
.cell.closeall {
    padding: 0 4px 0 3px;
}
.win {
    display: flex;
    align-items: center;
    gap: 6px;
    margin-left: auto;
    padding: 0 7px 0 6px;
}
.lists .win {
    padding-right: 7px;
}
.win button {
    width: 10px;
    height: 10px;
    color: #748a95;
}
.win .min {
    border-bottom: 2px solid;
}
.win .max {
    border: 1px solid;
    border-top-width: 2px;
}
.win .close {
    background: linear-gradient(45deg, transparent 44%, currentColor 44% 56%, transparent 56%), linear-gradient(-45deg, transparent 44%, currentColor 44% 56%, transparent 56%);
}
.win.cut {
    width: 29px;
    margin-left: 0;
    overflow: hidden;
}
.filter {
    width: 146px;
    border: 0;
    padding: 0 4px;
    background: #fff;
}
.filter::placeholder {
    color: #929292;
    font-style: italic;
}
.ticker {
    display: flex;
    align-items: center;
    gap: 5px;
    padding-left: 7px;
    flex: 1;
    min-width: 0;
    overflow: hidden;
}
.up {
    color: #007800;
}
.refresh {
    align-self: center;
}
.refresh-tab {
    width: 23px;
    display: flex;
    align-items: center;
    justify-content: center;
    background: #fff;
}

/* column titles */
.cols {
    width: 100%;
    table-layout: fixed;
    border-collapse: collapse;
    background: var(--navy);
    color: #fff;
}
.cols th {
    position: relative;
    height: 16px;
    padding: 0;
    font-weight: normal;
    line-height: 14px;
    text-align: center;
}
.cols th:not(:last-child)::after {
    content: "";
    position: absolute;
    right: 0;
    top: 4px;
    width: 1px;
    height: 8px;
    background: #fff;
}
.cols svg {
    display: inline-block;
    vertical-align: -3px;
}
.asc, .desc {
    display: inline-block;
    margin-right: 4px;
    border: 4px solid transparent;
    vertical-align: 1px;
}
.asc {
    border-bottom: 4px solid #fff;
    border-top: 0;
}
.desc {
    border-top: 4px solid #fff;
    border-bottom: 0;
    margin-left: 4px;
}
.t-lists th:nth-child(1) { width: 17px; }
.t-lists th:nth-child(2) { width: 134px; }
.t-lists th:nth-child(3) { width: 43px; }
.t-lists th:nth-child(4) { width: 67px; }
.t-port th:nth-child(1) { width: 17px; }
.t-port th:nth-child(2) { width: 33px; }
.t-port th:nth-child(3) { width: 19px; }
.t-port th:nth-child(4) { width: 95px; }
.t-port th:nth-child(5) { width: 74px; }
.t-port th:nth-child(6) { width: 78px; }
.t-port th:nth-child(7) { width: 80px; }
.t-port th:nth-child(8) { width: 80px; }
.t-port th:nth-child(9) { width: 19px; }
.t-ord th:nth-child(-n+3) { width: 19px; }
.t-ord th:nth-child(4) { width: 57px; }
.t-ord th:nth-child(5) { width: 56px; }
.t-ord th:nth-child(6) { width: 60px; }
.t-ord th:nth-child(7) { width: 16px; }
.t-ord th:nth-child(8) { width: 54px; }
.t-ord th:nth-child(9) { width: 57px; }
.t-ord th:nth-child(10) { width: 44px; }
.t-ord th:nth-child(11) { width: 60px; }

.summary {
    height: 59px;
    padding-top: 10px;
    background: var(--pale);
}
.summary div {
    display: flex;
}
.summary .big {
    gap: 26px;
    padding-left: 10px;
    font-size: 16px;
    line-height: 22px;
}
.summary .big svg {
    display: inline-block;
    margin-left: -2px;
}
.summary .small {
    gap: 52px;
    padding-left: 57px;
    line-height: 20px;
}

.tabs {
    display: flex;
    height: 20px;
    background: var(--steel);
}
.tabs button {
    padding: 0 12px 0 11px;
    background: linear-gradient(#fff, #eee);
    border-right: 1px solid var(--rule);
    border-bottom: 1px solid var(--rule);
}
.tabs .on {
    background: linear-gradient(#5b96ee, #3f7ddd);
    color: #fff;
    border-right-color: #2c60b8;
}
.ghost {
    position: absolute;
    right: 0;
    top: 60px;
    width: 175px;
    height: 21px;
    display: flex;
    align-items: center;
    gap: 18px;
    padding-left: 8px;
    background: rgba(175, 205, 228, 0.45);
    color: #a9bac5;
    font-family: "Noto Sans", sans-serif;
    font-size: 11px;
}
.ghost i {
    width: 6px;
    height: 6px;
    border-radius: 50%;
    background: #a9bac5;
}

/* chart windows */
.chart {
    display: flex;
    flex-direction: column;
    flex: 1;
    min-height: 0;
}
.account {
    height: 35px;
    flex-shrink: 0;
    background: #fff;
    border-bottom: 1px solid var(--rule);
    overflow: hidden;
}
.account div {
    display: flex;
    gap: 36px;
    height: 16px;
    align-items: center;
    padding-left: 40px;
}
.account .second {
    gap: 94px;
    padding-left: 97px;
}
.quarter .account {
    height: 36px;
}
.quarter .account div {
    gap: 47px;
    padding-left: 50px;
}
.quarter .account .second {
    gap: 110px;
    padding-left: 113px;
}
.account svg {
    display: inline-block;
    vertical-align: middle;
    margin: -3px 1px 0 2px;
}
.plot {
    position: relative;
    flex: 1;
    min-height: 0;
    overflow: hidden;
    background: #fff;
}
.canvas {
    width: 100%;
    height: 100%;
}
.canvas text {
    white-space: pre;
}
.legend {
    position: absolute;
    left: 0;
    top: 0;
    display: flex;
    height: 17px;
    background: var(--pale);
    border-bottom: 1px solid var(--rule);
}
.legend.rsi {
    top: 465px;
}
.legend.macd {
    top: 553px;
}
.legend span {
    display: flex;
    align-items: center;
    gap: 3px;
    padding: 0 3px;
    border-right: 1px solid var(--rule);
}
.sw {
    width: 10px;
    height: 10px;
}
.duo { background: linear-gradient(90deg, #50d250 50%, #e06666 50%); }
.trio { background: linear-gradient(90deg, #50d250 33%, #e06666 33% 66%, #3333e0 66%); }
.pink { background: #ff9999; }
.blue { background: #6666ff; }
.maroon { background: #990000; }
.black { background: #000; }
.strip {
    height: 4px;
    flex-shrink: 0;
    display: flex;
    background: var(--steel);
    border-top: 1px solid var(--edge);
}
.strip i {
    width: 32px;
    border-right: 1px solid var(--rule);
}
.strip i + i {
    width: 15px;
}
.strip.taskbar {
    height: 5px;
}
.taskbar i:nth-child(1) {
    width: 16px;
}
.taskbar i:nth-child(2) {
    width: 101px;
    background: linear-gradient(90deg, #fff 86%, var(--rule) 86% 87%, #fff 87%);
}
.taskbar i:nth-child(3) {
    width: 22px;
    background: #2d8fdc;
}

.body {
    display: flex;
    flex: 1;
    min-height: 0;
}
.view {
    flex: 1;
    min-width: 0;
    display: flex;
    flex-direction: column;
}
.side {
    width: 31px;
    flex-shrink: 0;
    display: flex;
    flex-direction: column;
    border-right: 1px solid var(--rule);
}
.side .scroll {
    height: 13px;
    border-bottom: 1px solid var(--rule);
}
.scroll.up::after {
    content: "";
    border: 4px solid transparent;
    border-bottom-color: #6f8792;
    border-top: 0;
}
.scroll.down {
    background: linear-gradient(#b6d4e1, #9dbecc);
    border-top: 1px solid var(--rule);
}
.scroll.down::after {
    content: "";
    border: 4px solid transparent;
    border-top-color: #000;
    border-bottom: 0;
}
.stack {
    flex: 1;
    min-height: 0;
    overflow: hidden;
    padding: 2px;
}
.side .more {
    position: relative;
    height: 34px;
    gap: 2px;
}
.more i {
    width: 4px;
    height: 4px;
    border-radius: 50%;
    background: #3a4348;
}
.more::after {
    content: "";
    position: absolute;
    right: 6px;
    bottom: 8px;
    border: 4px solid transparent;
    border-top-color: #000;
    border-bottom: 0;
}

/* order entry */
.trade {
    display: flex;
    align-items: flex-end;
    gap: 3px;
    height: 47px;
    flex-shrink: 0;
    padding-bottom: 4px;
    background: #fff;
    border-bottom: 1px solid var(--rule);
    overflow: hidden;
}
.trade > * {
    flex-shrink: 0;
}
.setup {
    display: flex;
    flex-direction: column;
    gap: 4px;
    padding-bottom: 3px;
}
.setup button {
    width: 15px;
    height: 18px;
    border: 1px solid var(--rule);
    border-left: 0;
    border-radius: 0 3px 3px 0;
    background: #f4f4f4;
}
.qty, .group, .market {
    display: flex;
    flex-direction: column;
    align-items: center;
}
.qty {
    padding-bottom: 6px;
    margin-left: -1px;
}
.qty label, .group span, .market span {
    line-height: 15px;
}
.qty input {
    width: 46px;
    height: 22px;
    border: 1px solid var(--rule);
    border-radius: 2px;
    text-align: right;
    padding: 1px 2px;
    background: #fff;
}
.bar {
    width: 1px;
    height: 32px;
    align-self: center;
    background: var(--rule);
}
.qty + .bar {
    margin-left: 1px;
}
.group div {
    display: flex;
    gap: 3px;
}
.group button {
    width: 28px;
    height: 28px;
    border: 1px solid #8499a3;
    border-radius: 3px;
    background: linear-gradient(#fff, #e4e8ea);
}
.group svg {
    width: 26px;
    height: 26px;
}
.pair {
    display: flex;
    flex-direction: column;
    gap: 4px;
}
.pair button {
    width: 65px;
    height: 18px;
    border-radius: 2px;
    color: #fff;
}
.pair.buy {
    width: 58px;
    overflow: hidden;
}
.market button {
    width: 70px;
    height: 28px;
    border-radius: 3px;
}
.market svg {
    width: 24px;
    height: 24px;
}
.sell button {
    background: linear-gradient(#f05a5a, #d94444);
    box-shadow: inset 0 0 0 1px #c94a4a;
}
.buy button {
    background: linear-gradient(#38c638, #22a822);
    box-shadow: inset 0 0 0 1px #2a9a2a;
}
.checks {
    display: flex;
    flex-direction: column;
    gap: 11px;
    padding: 0 0 1px 6px;
}
.checks label {
    display: flex;
    align-items: center;
    gap: 4px;
}
.checks input {
    appearance: none;
    width: 12px;
    height: 12px;
    margin: 0;
    border: 1px solid #5f7884;
    border-radius: 2px;
    background: #fff;
}
.warm {
    color: #b86a10;
}
```

FILE: app.js
```js
const tools = [
    'cursor*', 'lock', 'zoom', 'bell', 'bellcross', 'ruler', 'magnet*', 'line', 'lineg', 'liner', 'hline', 'rayg', 'rayr',
    'vline', 'segment', 'zigzag', 'wedge*', 'parallel', 'fork', 'fib', 'regress', 'tools', 'trash', 'move', 'copy', 'text',
    'bubble', 'arrowseg', 'right', 'down', 'up', 'warn', 'check', 'cross', 'thumb', 'thumbdown', 'ellipse', 'square', 'tri',
    'peaks', 'undo', 'waves', 'abc', 'rotsq', 'rotel'
];

function toolButtons(list) {
    return list.map(name => {
        const id = name.replace('*', '');
        return `<button class="tool${name.endsWith('*') ? ' on' : ''}" aria-label="${id}"><svg><use href="#i-${id}" /></svg></button>`;
    }).join('');
}

document.getElementById('toolbar').innerHTML = toolButtons(tools);
document.getElementById('sidebar').innerHTML = toolButtons(tools.slice(0, 27));

// All series are stored in thirds of a pixel
const DARK = '#1f4d10', GREEN = '#52d452', RED = '#e66e6e', GRID = '#728d9a';

const path = (pts, dx, dy) => 'M' + pts.map(p => (p[0] / 3 + dx).toFixed(1) + ' ' + (p[1] / 3 + dy).toFixed(1)).join('L');
const line = (pts, dx, dy, color, extra = '') => `<path d="${path(pts, dx, dy)}" fill="none" stroke="${color}" ${extra}/>`;
const rect = (x, y, w, h, fill, extra = '') => `<rect x="${x}" y="${y}" width="${w}" height="${h}" fill="${fill}" ${extra}/>`;
const text = (x, y, s, extra = '') => `<text x="${x}" y="${y}" ${extra}>${s}</text>`;
const shift = (pts, ox, oy) => pts.map(p => [p[0] + ox, p[1] + oy]);

function candle(x, high, top, bottom, low, color, half) {
    const h = Math.max(1, bottom - top);
    let out = rect(x, high, 1, Math.max(1, low - high), DARK);
    out += rect(x - half, top, half * 2 + 1, h, DARK);
    if (h > 2) out += rect(x - half + 1, top + 1, half * 2 - 1, h - 2, color);
    return out;
}

function tag(x, y, w, s, color, fill, border = GRID) {
    return rect(x + 0.5, y + 0.5, w - 1, 15, fill, `stroke="${border}"`) + text(x + 2, y + 12, s, `fill="${color}"`);
}

function valueAt(pts, x) {
    for (let i = 1; i < pts.length; i++) {
        if (x <= pts[i][0]) {
            const [a, b] = [pts[i - 1], pts[i]];
            return a[1] + (b[1] - a[1]) * (x - a[0]) / (b[0] - a[0] || 1);
        }
    }
    return pts[pts.length - 1][1];
}

// fills the area between two lines, one colour per side
function between(a, b, dx, dy, over, under) {
    const start = Math.max(a[0][0], b[0][0]), end = a[a.length - 1][0];
    let out = '', run = [], side = null;
    const flush = () => {
        const color = side ? over : under;
        if (run.length > 1 && color) {
            const pts = run.map(r => [r[0], r[1]]).concat(run.slice().reverse().map(r => [r[0], r[2]]));
            out += `<path d="${path(pts, dx, dy)}Z" fill="${color}"/>`;
        }
    };
    for (let x = start; x <= end; x += 3) {
        const p = [x, valueAt(a, x), valueAt(b, x)];
        const s = p[1] <= p[2];
        if (side !== null && s !== side) {
            run.push(p);
            flush();
            run = [];
        }
        side = s;
        run.push(p);
    }
    flush();
    return out;
}

function drawTicks() {
    // x, high, top, bottom, low, direction
    const data = `14 993 1057 1081 1081 g;28 1054 1054 1102 1138 r;40 1045 1060 1105 1108 g;56 1020 1021 1063 1070 g;68 1021 1021 1021 1021 g;
82 893 925 927 978 g;95 855 862 928 940 g;108 838 838 860 875 g;122 835 841 886 920 r;135 870 883 890 935 g;149 846 880 889 912 g;161 872 874 946 965 r;
175 937 945 947 980 g;188 883 886 949 955 g;202 850 868 883 885 g;215 838 841 868 870 g;229 841 841 874 875 r;241 855 862 874 883 g;256 835 847 862 870 g;
268 792 808 847 850 g;284 811 811 856 865 r;296 811 817 861 868 g;310 745 760 821 825 g;322 708 745 763 785 g;337 712 718 745 772 g;349 702 721 748 750 r;
362 748 748 748 748 g;376 862 868 871 930 r;391 853 877 946 950 r;404 934 949 958 983 r;418 928 943 955 968 g;430 937 946 974 978 r;442 920 922 982 984 g;
457 860 865 922 935 g;470 820 860 870 872 r;484 840 853 874 887 g;497 838 853 865 870 r;511 843 856 865 883 g;523 788 811 857 860 g;538 752 784 817 827 g;
551 772 784 814 830 r;565 778 817 862 872 r;578 835 862 868 887 r;592 835 862 877 892 r;604 870 874 946 960 r;619 902 937 985 990 r;631 925 943 988 997 g;
646 937 937 1000 1000 r;659 1000 1000 1000 1000 g;674 712 715 730 780 g;686 710 715 757 772 r;700 750 760 862 875 r;713 860 862 870 915 r;724 817 820 868 880 g;
739 808 826 829 838 g;751 815 832 847 860 r;767 812 814 845 870 g;779 795 817 823 830 r;794 785 793 823 825 g;806 770 793 800 805 g;819 792 794 798 808 r;
832 795 799 844 848 r;846 835 841 848 857 g;860 838 843 846 850 g;874 800 826 847 850 g;887 782 820 822 835 g;901 760 766 814 818 g;914 745 748 763 775 g;
928 742 748 757 790 r;941 753 757 775 780 r;954 775 775 775 775 g;968 605 652 655 668 g;979 522 544 655 657 g;994 490 499 544 575 g;1006 450 457 496 510 g;
1021 435 457 469 487 r;1033 460 463 475 515 r;1048 455 481 494 495 r;1060 435 454 487 498 g;1075 427 448 450 460 g;1088 432 436 445 447 g;1102 437 440 451 463 r;
1114 438 451 457 463 r;1128 447 457 466 480 r;1141 447 466 520 533 r;1156 495 499 520 535 g;1168 485 500 502 525 g;1183 432 438 499 505 g;1196 388 388 434 447 g;
1210 385 388 436 470 r;1223 420 433 460 495 r;1237 453 455 463 497 g;1250 455 455 455 455 g;1262 220 235 280 288 g;1276 190 190 241 250 g;1288 175 193 211 216 r;
1304 147 172 211 230 g;1315 160 172 184 210 r;1330 112 112 187 193 g;1343 115 115 139 140 r`;
    const sma = [[40, 1053], [82, 1020], [108, 998], [149, 978], [188, 965], [215, 952], [241, 943], [268, 925], [296, 900], [322, 868], [349, 842], [376, 837], [404, 848], [430, 850], [470, 847], [511, 848], [551, 844], [578, 848], [604, 868], [631, 890], [655, 900], [674, 888], [700, 875], [724, 870], [780, 862], [808, 861], [848, 858], [874, 850], [901, 830], [928, 808], [954, 815], [968, 805], [994, 770], [1021, 730], [1060, 680], [1102, 612], [1141, 570], [1183, 530], [1223, 478], [1250, 460], [1268, 448], [1288, 425], [1308, 400], [1330, 375], [1343, 362]];
    const trend1 = [[0, 1130], [83, 1130], [95, 1100], [108, 1048], [202, 1048], [215, 1037], [229, 1030], [241, 1030], [256, 1012], [268, 982], [296, 982], [310, 958], [322, 923], [337, 920], [349, 895], [376, 895]];
    const trend2 = [[376, 895], [391, 700], [404, 763], [418, 763], [430, 772], [631, 772], [646, 776], [659, 827]];
    const trend3 = [[659, 827], [674, 985], [686, 976], [793, 976], [805, 965], [874, 965], [887, 952], [901, 935], [914, 898], [941, 898], [955, 895], [968, 797], [979, 772], [994, 720], [1006, 668], [1021, 646], [1048, 646], [1060, 641], [1075, 612], [1087, 596], [1102, 596], [1114, 592], [1183, 592], [1196, 562], [1250, 562], [1262, 455], [1276, 420], [1288, 385], [1303, 385], [1315, 378], [1330, 350], [1343, 312]];

    let out = rect(0, 0, 463, 393, 'url(#plotBg)');
    out += line(sma, -1, -3, '#ff9999', 'stroke-dasharray="5 4"');
    out += '<g shape-rendering="crispEdges">';
    data.split(';').forEach(row => {
        const v = row.trim().split(' ');
        const [x, hi, top, bot, low] = v.slice(0, 5).map(n => Math.round(n / 3));
        out += candle(x - 1, hi - 3, top - 3, bot - 2, low - 2, v[5] === 'g' ? GREEN : RED, 2);
    });
    out += '</g>';
    [[trend1, '#44cf44'], [trend2, '#e06060'], [trend3, '#44cf44']].forEach(([pts, color]) => {
        out += line(pts, -1, -3, color, 'stroke-width="2" stroke-linejoin="round"');
    });
    out += `<path d="M463.500 0V393.500M0 393.500H464M26.500 394v3M124.500 394v3M223.500 394v3M321.500 394v3M419.500 394v3M464 158.500h4M464 214.500h4M464 269.500h4M464 325.500h4M464 47.500h4M464 103.500h4" stroke="${GRID}" fill="none"/>`;
    out += '<path d="M464 43.500h4" stroke="#000"/><path d="M464 100.500h4" stroke="#44cf44"/><path d="M464 117.500h4" stroke="#ff9999"/>';
    out += text(1, 391, '© ProRealTime.com') + text(103, 391, 'Données différées de 15 min', 'font-style="italic"');
    [[26, '28'], [124, '29'], [321, '02'], [419, '03']].forEach(([x, s]) => out += text(x, 408, s, 'text-anchor="middle"'));
    out += text(222, 408, 'juin', 'text-anchor="middle" font-weight="bold"');
    [[158, '4 850'], [214, '4 800'], [269, '4 750'], [325, '4 700']].forEach(([y, s]) => out += text(470, y + 4, s));
    out += tag(468, 35, 46, '4 953,49', '#000', 'url(#tagGold)');
    out += tag(468, 51, 22, '26T', '#104a20', '#90ee90', '#90ee90');
    out += tag(468, 92, 46, '4 902,11', '#44cf44', 'url(#tagPale)');
    out += tag(468, 109, 46, '4 887,31', '#ff8f8f', 'url(#tagPale)');
    document.getElementById('tickChart').innerHTML = out;
}

function drawQuarter() {
    // one array per trading day, the close of each 15 minute bar
    const days = [
        [[103, 903], [112, 895], [120, 880], [128, 875], [136, 873], [144, 893], [150, 885], [158, 860], [166, 855], [174, 850], [180, 840], [188, 845], [194, 870]],
        [[200, 800], [210, 810], [218, 805], [225, 755], [235, 745], [243, 700], [247, 655], [256, 650], [262, 620], [270, 585], [278, 605], [286, 612], [290, 582], [298, 590], [304, 622], [312, 602], [320, 590], [328, 595], [336, 578], [344, 588], [352, 570], [358, 560], [366, 540], [372, 562], [380, 565], [386, 550], [392, 580], [398, 640], [404, 690], [410, 640], [416, 612], [422, 660], [428, 678], [436, 670], [444, 655], [450, 635], [456, 608]],
        [[460, 515], [468, 520], [476, 485], [484, 465], [490, 432], [497, 465], [505, 470], [513, 478], [521, 468], [529, 472], [537, 505], [545, 540], [552, 545], [558, 510], [566, 480], [574, 455], [582, 450], [590, 435], [598, 445], [606, 457], [614, 460], [622, 450], [630, 430], [638, 412], [645, 410], [653, 425], [660, 428], [668, 405], [676, 365], [684, 318], [690, 308], [697, 358], [705, 310], [712, 335]],
        [[720, 500], [728, 460], [735, 480], [742, 510], [750, 525], [756, 550], [764, 540], [772, 548], [780, 540], [788, 515], [796, 500], [803, 450], [810, 448], [818, 455], [826, 460], [834, 440], [842, 460], [850, 435], [858, 430], [866, 380], [873, 352], [881, 372], [888, 380], [896, 420], [903, 450], [910, 442], [918, 445], [926, 480], [934, 512], [942, 530], [950, 545], [956, 552], [963, 528], [968, 570], [974, 585]],
        [[979, 335], [988, 355], [996, 330], [1003, 350], [1010, 410], [1016, 455], [1023, 462], [1030, 455], [1036, 430], [1044, 415], [1050, 420], [1058, 420], [1066, 448], [1074, 420], [1082, 395], [1090, 412], [1098, 385], [1106, 378], [1114, 390], [1122, 393], [1128, 400], [1134, 435], [1142, 442], [1150, 435], [1158, 435], [1166, 425], [1174, 408], [1182, 405], [1190, 380], [1198, 360], [1206, 343], [1214, 347], [1222, 367], [1228, 350], [1236, 366]],
        [[1240, 232], [1248, 206], [1256, 180], [1262, 128], [1270, 150], [1276, 100], [1284, 88], [1292, 75], [1300, 78], [1308, 88], [1316, 65], [1324, 85], [1332, 68], [1338, 38], [1346, 35], [1354, 47], [1362, 48], [1370, 60], [1378, 45], [1386, 55], [1394, 60], [1402, 70], [1410, 95], [1418, 98], [1426, 96], [1434, 85], [1440, 45], [1448, 35], [1456, -10], [1464, 20], [1472, 40], [1478, 85], [1486, 92], [1492, 58]],
        [[1501, -130], [1508, -145], [1516, -170], [1524, -195], [1532, -212], [1540, -182], [1548, -210], [1555, -215], [1562, -228], [1570, -275], [1576, -258], [1583, -255]]
    ];
    const sma20 = [[96, 908], [130, 906], [160, 908], [190, 895], [220, 865], [250, 815], [280, 760], [310, 700], [340, 650], [365, 610], [380, 592], [395, 588], [420, 592], [440, 603], [455, 605], [470, 595], [490, 575], [520, 558], [550, 545], [570, 515], [590, 485], [610, 470], [640, 465], [665, 455], [690, 425], [710, 400], [730, 405], [760, 425], [790, 440], [808, 445], [828, 455], [848, 470], [863, 483], [878, 470], [898, 455], [918, 443], [948, 445], [963, 460], [978, 465], [998, 450], [1028, 460], [1048, 462], [1078, 455], [1098, 430], [1118, 405], [1133, 405], [1148, 420], [1173, 415], [1198, 405], [1218, 395], [1238, 385], [1258, 355], [1278, 320], [1298, 270], [1318, 220], [1343, 170], [1368, 110], [1388, 80], [1408, 68], [1438, 65], [1468, 60], [1493, 60], [1508, 45], [1538, -15], [1558, -60], [1568, -90], [1583, -105]];
    const sma50 = [[96, 1050], [160, 1010], [170, 990], [200, 965], [230, 935], [260, 895], [300, 835], [350, 790], [400, 745], [450, 712], [500, 655], [550, 600], [600, 555], [650, 530], [700, 497], [720, 488], [760, 483], [790, 475], [828, 455], [858, 448], [888, 445], [918, 443], [948, 448], [978, 448], [998, 446], [1038, 450], [1078, 458], [1098, 455], [1138, 440], [1178, 433], [1238, 420], [1268, 405], [1298, 370], [1348, 305], [1398, 255], [1448, 210], [1498, 165], [1538, 95], [1583, 27]];
    const rsi = [[96, 140], [110, 138], [133, 128], [142, 150], [150, 138], [160, 135], [180, 127], [193, 152], [198, 128], [208, 138], [220, 122], [235, 115], [245, 100], [255, 100], [267, 92], [275, 105], [285, 102], [290, 105], [297, 128], [305, 122], [320, 124], [332, 120], [340, 130], [350, 123], [365, 115], [370, 140], [375, 132], [385, 138], [392, 155], [400, 185], [410, 165], [420, 175], [430, 182], [445, 170], [455, 155], [462, 138], [480, 130], [490, 128], [495, 137], [510, 140], [530, 145], [540, 165], [548, 170], [556, 150], [570, 145], [587, 137], [600, 147], [625, 143], [640, 132], [648, 135], [654, 150], [665, 135], [682, 115], [690, 132], [703, 124], [712, 135], [720, 188], [725, 178], [740, 193], [755, 197], [765, 190], [785, 187], [800, 162], [815, 160], [825, 165], [840, 160]].concat(
        shift([[5, 525], [12, 517], [18, 522], [30, 500], [40, 513], [60, 535], [75, 528], [85, 535], [92, 555], [112, 562], [121, 550], [127, 563], [136, 566], [142, 503], [158, 500], [163, 510], [173, 528], [185, 533], [195, 523], [215, 523], [227, 528], [243, 518], [247, 522], [265, 514], [285, 518], [292, 522], [298, 538], [320, 534], [332, 520], [338, 516], [343, 523], [355, 508], [372, 500], [382, 514], [388, 507], [397, 518], [402, 482], [418, 466], [427, 475], [440, 466], [455, 466], [465, 471], [480, 468], [485, 482], [500, 472], [510, 480], [515, 477], [530, 490], [540, 485], [548, 497], [557, 500], [566, 518], [590, 514], [600, 505], [607, 492], [620, 480], [627, 508], [634, 505], [641, 530], [650, 528], [658, 510], [662, 482], [672, 475], [687, 468], [694, 483], [710, 475], [717, 472], [723, 475], [732, 468], [745, 477]], 837, -360));
    const macd = [[96, 440], [110, 443], [130, 440], [150, 445], [165, 443], [185, 442], [193, 448], [205, 440], [225, 428], [240, 410], [255, 378], [270, 353], [280, 348], [310, 350], [330, 360], [345, 372], [365, 380], [385, 388], [400, 430], [415, 455], [430, 482], [445, 490], [455, 485], [462, 462], [475, 440], [490, 412], [515, 408], [530, 412], [545, 430], [555, 447], [570, 447], [590, 435], [625, 443], [640, 440], [660, 443], [672, 435], [682, 423], [705, 412], [715, 423], [730, 455], [745, 505], [760, 540], [770, 552], [785, 558], [800, 550], [810, 535], [830, 525]].concat(
        shift([[0, 880], [10, 868], [25, 855], [32, 840], [45, 835], [60, 843], [75, 850], [85, 860], [95, 885], [110, 905], [125, 918], [136, 935], [142, 905], [150, 890], [158, 853], [165, 845], [185, 858], [210, 850], [235, 855], [245, 848], [265, 840], [290, 840], [300, 850], [320, 862], [345, 858], [372, 838], [397, 832], [410, 790], [425, 745], [440, 710], [455, 697], [475, 690], [485, 695], [500, 693], [520, 708], [550, 735], [565, 765], [585, 793], [600, 800], [620, 790], [635, 795], [645, 815], [655, 820], [665, 790], [670, 765], [685, 730], [700, 710], [720, 690], [735, 682], [746, 685]], 837, -360));
    const signal = [[96, 413], [120, 430], [150, 437], [190, 443], [220, 438], [240, 428], [260, 405], [280, 380], [300, 363], [325, 357], [360, 367], [385, 373], [400, 387], [420, 415], [445, 452], [460, 463], [480, 457], [500, 437], [525, 422], [540, 422], [560, 430], [590, 437], [620, 438], [670, 440], [700, 430], [720, 425], [740, 450], [760, 485], [780, 515], [800, 535], [820, 535]].concat(
        shift([[0, 888], [25, 870], [45, 853], [65, 849], [85, 852], [105, 875], [125, 893], [142, 902], [155, 893], [175, 872], [210, 858], [250, 853], [300, 843], [345, 856], [400, 838], [415, 820], [440, 770], [460, 735], [485, 712], [515, 706], [550, 718], [575, 745], [600, 773], [635, 785], [658, 800], [670, 795], [700, 755], [720, 725], [735, 708], [746, 705]], 837, -360));

    let out = '<clipPath id="clipMain"><rect x="0" y="0" width="512" height="464"/></clipPath>';
    out += rect(0, 0, 512, 649, 'url(#plotBg)');
    out += '<g clip-path="url(#clipMain)">';
    out += between(sma20, sma50, -32, 134, 'rgba(140,140,255,0.42)', 'rgba(170,70,80,0.45)');
    out += line(sma20, -32, 134, '#6666ff', 'stroke-dasharray="4 3"');
    out += line(sma50, -32, 134, '#990000', 'stroke-dasharray="4 3" stroke-width="1.3"');
    out += '<g shape-rendering="crispEdges">';
    let seed = 7;
    const rnd = () => (seed = (seed * 16807) % 2147483647) / 2147483647;
    days.forEach(day => {
        let prev = day[0][1] + 12;
        day.forEach(([x, y]) => {
            const top = Math.round(Math.min(prev, y) / 3) + 134;
            const bot = Math.max(top + 3, Math.round(Math.max(prev, y) / 3) + 135);
            const px = Math.round(x / 3) - 32;
            out += candle(px, top - Math.round(rnd() * rnd() * 9), top, bot, bot + Math.round(rnd() * rnd() * 9), y <= prev ? GREEN : RED, 1);
            prev = y;
        });
    });
    out += '</g>';
    out += line([[194, 650], [1632, -320]], -32, 134, '#ff2020', 'stroke-dasharray="4 3" stroke-width="1.3"');
    out += line([[906, 358], [1632, -130]], -32, 134, '#3fb93f', 'stroke-dasharray="4 4" stroke-width="1.3"');
    out += line([[668, 643], [1632, -5]], -32, 134, '#3fb93f', 'stroke-width="1.3"');
    out += '</g>';

    out += between(rsi, [[96, 124], [1700, 124]], -32, 454, 'rgba(190,90,110,0.5)', null);
    out += line(rsi, -32, 454, '#000', 'stroke-width="1.2"');
    out += '<path d="M0 495.500H512M0 526.500H512M0 625.500H512" stroke="#2525d0"/>';
    out += between(macd, signal, -32, 454, 'rgba(100,225,120,0.6)', 'rgba(215,85,110,0.5)');
    out += '<g shape-rendering="crispEdges">';
    for (let x = 103; x < 1584; x += 7.8) {
        const d = Math.round((valueAt(signal, x) - valueAt(macd, x)) / 3);
        const px = Math.round(x / 3) - 32;
        if (d > 0) out += rect(px, 625 - d, 1, d, '#44cf44');
        else out += rect(px, 626, 1, 1 - d, '#e06060');
    }
    out += '</g>';
    out += line(signal, -32, 454, '#e06060', 'stroke-width="1.5"') + line(macd, -32, 454, '#2525d0', 'stroke-width="1.3"');

    out += `<path d="M512.500 0V649M0 464.500H512M0 552.500H512M0 649.500H513" stroke="${GRID}" fill="none"/><path d="M513 464.500H600M513 552.500H600" stroke="#c3d0d6"/>`;
    [[34, '27'], [121, '28'], [208, '29'], [381, '02'], [468, '03']].forEach(([x, s]) => out += text(x, 664, s, 'text-anchor="middle"'));
    out += text(294, 664, 'juin', 'text-anchor="middle" font-weight="bold"');
    let ticks = '';
    [34, 121, 208, 294, 381, 468].forEach(x => ticks += `M${x}.500 650v3`);
    [[107, '4 900'], [161, '4 850'], [215, '4 800'], [269, '4 750'], [324, '4 700'], [378, '4 650'], [432, '4 600'], [510, '50'], [581, '20'], [603, '10'], [625, '0']].forEach(([y, s]) => {
        ticks += `M513 ${y}.500h4`;
        out += text(519, y + 4, s);
    });
    out += text(519, 476, '100', 'font-weight="bold"');
    out += `<path d="${ticks}M513 472.500h4M513 53.500h4" stroke="${GRID}"/>`;
    out += '<path d="M513 49.500h4M513 493.500h4" stroke="#000"/><path d="M513 98.500h4M513 562.500h4" stroke="#4444f0"/><path d="M513 142.500h4" stroke="#900"/><path d="M513 569.500h4" stroke="#e06060"/><path d="M513 618.500h4" stroke="#44cf44"/>';
    out += tag(517, 41, 46, '4 953,49', '#000', 'url(#tagGold)');
    out += tag(517, 56, 36, '11m12s', '#104a20', '#90ee90', '#90ee90');
    out += tag(517, 90, 46, '4 906,20', '#6666ff', 'url(#tagPale)');
    out += tag(517, 134, 46, '4 867,40', '#990000', 'url(#tagPale)');
    out += tag(517, 485, 40, '73,42', '#000', 'url(#tagPale)');
    out += tag(517, 554, 40, '28,53', '#2525d0', 'url(#tagPale)');
    out += tag(517, 565, 40, '25,57', '#e06060', 'url(#tagPale)');
    out += tag(517, 610, 40, '2,960', '#44cf44', 'url(#tagPale)');
    out += text(2, 462, '© ProRealTime.com') + text(104, 462, 'Données différées de 15 min', 'font-style="italic"');
    document.getElementById('quarterChart').innerHTML = out;
}

drawTicks();
drawQuarter();
```
